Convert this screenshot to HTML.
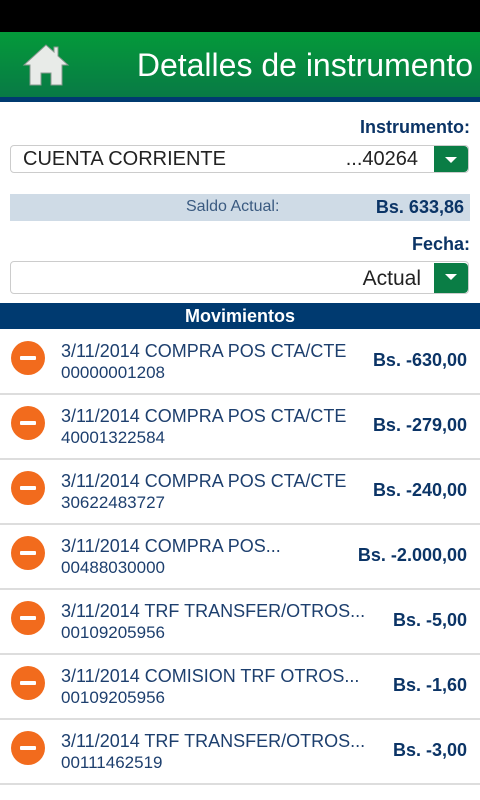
<!DOCTYPE html>
<html><head><meta charset="utf-8"><style>
*{margin:0;padding:0;box-sizing:border-box}
body{width:480px;height:800px;background:#fff;font-family:"Liberation Sans",sans-serif;position:relative;overflow:hidden}
.abs{position:absolute}
.top{left:0;top:0;width:480px;height:32px;background:#000}
.hdr{left:0;top:32px;width:480px;height:65px;background:linear-gradient(#049a3a,#087a45)}
.line{left:0;top:97px;width:480px;height:5px;background:#003a70}
.title{right:7px;top:47px;color:#fff;font-size:32px}
.lbl{right:10px;color:#0b3466;font-weight:bold;font-size:18px}
.sel{left:10px;width:459px;border:1px solid #ccc;border-radius:4px;background:#fff}
.btn{position:absolute;right:0;top:0;width:34px;height:100%;background:#0a7d45;border-radius:0 4px 4px 0}
.btn:after{content:"";position:absolute;left:11px;top:11px;border-left:6px solid transparent;border-right:6px solid transparent;border-top:6px solid #fff}
.row{left:0;width:480px;height:65px;border-bottom:2px solid #ddd}
.ic{position:absolute;left:11px;top:11px;width:34px;height:34px;border-radius:50%;background:#f26b1d}
.ic:after{content:"";position:absolute;left:9px;top:15px;width:16px;height:4px;background:#fff;border-radius:1px}
.t1{position:absolute;left:61px;top:11px;color:#1d3f6e;font-size:18px;white-space:nowrap}
.t2{position:absolute;left:61px;top:33px;color:#1d3f6e;font-size:17px}
.amt{position:absolute;right:13px;top:20px;color:#0b3466;font-weight:bold;font-size:18px}
</style></head><body>
<div class="abs top"></div>
<div class="abs hdr"></div>
<div class="abs line"></div>
<svg class="abs" style="left:22px;top:43px" width="48" height="44" viewBox="0 0 48 44"><path d="M24 2 L2 22 L8 22 L8 42 L19 42 L19 30 L29 30 L29 42 L40 42 L40 22 L46 22 L36 13 L36 4 L32 4 L32 9 Z" fill="#e8ebe8" stroke="#8a9a90" stroke-width="1"/></svg>
<div class="abs title">Detalles de instrumento</div>
<div class="abs lbl" style="top:117px">Instrumento:</div>
<div class="abs sel" style="top:145px;height:28px"><span style="position:absolute;left:12px;top:2px;font-size:20px;color:#222">CUENTA CORRIENTE</span><span style="position:absolute;right:50px;top:2px;font-size:20px;color:#222">...40264</span><div class="btn"></div></div>
<div class="abs" style="left:10px;top:194px;width:460px;height:27px;background:#cfdbe6"><span style="position:absolute;left:176px;top:4px;font-size:16px;color:#3a5a80">Saldo Actual:</span><span style="position:absolute;right:6px;top:3px;font-size:18px;font-weight:bold;color:#0b3466">Bs. 633,86</span></div>
<div class="abs lbl" style="top:234px">Fecha:</div>
<div class="abs sel" style="top:261px;height:33px"><span style="position:absolute;right:47px;top:5px;font-size:21px;color:#222">Actual</span><div class="btn" style="top:1px;height:30px"></div></div>
<div class="abs" style="left:0;top:303px;width:480px;height:26px;background:#003a70;color:#fff;font-weight:bold;font-size:18px;text-align:center;line-height:26px">Movimientos</div>
<div class="abs row" style="top:330px"><div class="ic"></div><div class="t1">3/11/2014 COMPRA POS CTA/CTE</div><div class="t2">00000001208</div><div class="amt">Bs. -630,00</div></div>
<div class="abs row" style="top:395px"><div class="ic"></div><div class="t1">3/11/2014 COMPRA POS CTA/CTE</div><div class="t2">40001322584</div><div class="amt">Bs. -279,00</div></div>
<div class="abs row" style="top:460px"><div class="ic"></div><div class="t1">3/11/2014 COMPRA POS CTA/CTE</div><div class="t2">30622483727</div><div class="amt">Bs. -240,00</div></div>
<div class="abs row" style="top:525px"><div class="ic"></div><div class="t1">3/11/2014 COMPRA POS...</div><div class="t2">00488030000</div><div class="amt">Bs. -2.000,00</div></div>
<div class="abs row" style="top:590px"><div class="ic"></div><div class="t1">3/11/2014 TRF TRANSFER/OTROS...</div><div class="t2">00109205956</div><div class="amt">Bs. -5,00</div></div>
<div class="abs row" style="top:655px"><div class="ic"></div><div class="t1">3/11/2014 COMISION TRF OTROS...</div><div class="t2">00109205956</div><div class="amt">Bs. -1,60</div></div>
<div class="abs row" style="top:720px"><div class="ic"></div><div class="t1">3/11/2014 TRF TRANSFER/OTROS...</div><div class="t2">00111462519</div><div class="amt">Bs. -3,00</div></div>
</body></html>
